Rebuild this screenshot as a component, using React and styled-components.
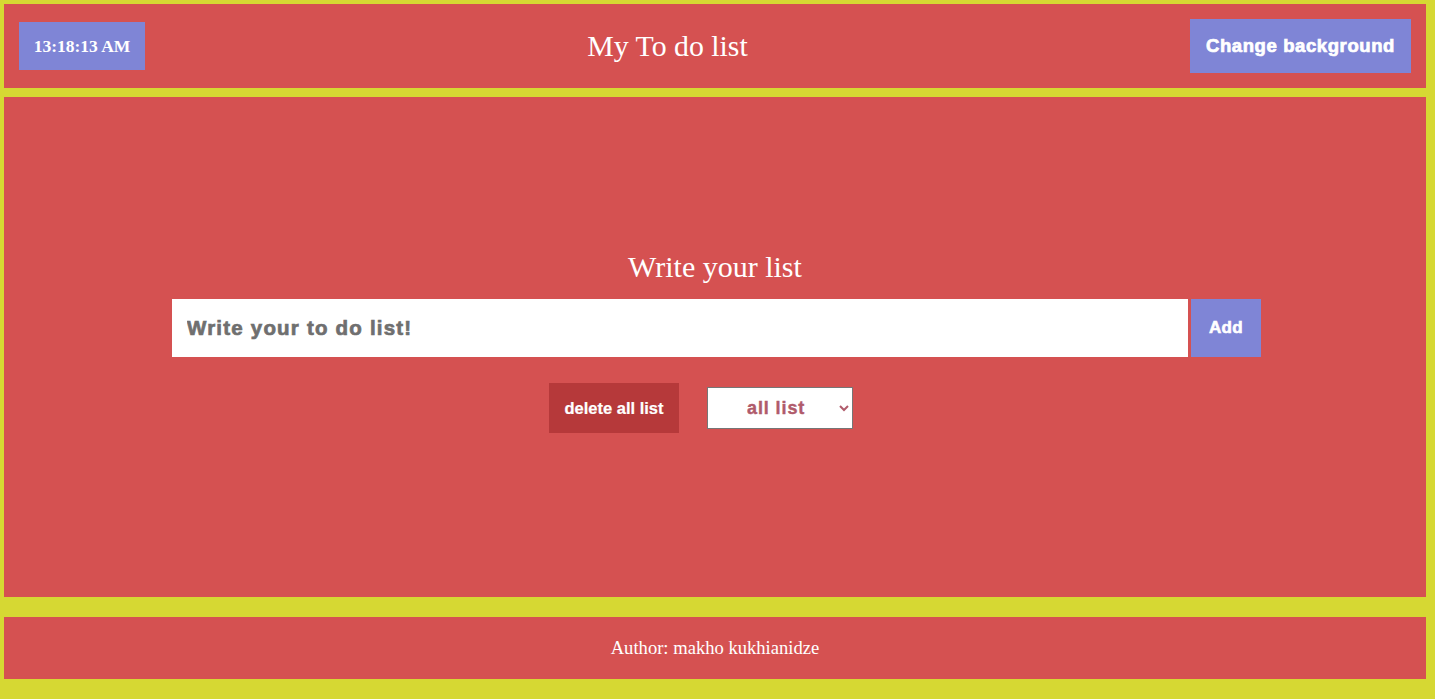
import React, { useState } from "react";
import styled, { createGlobalStyle } from "styled-components";

const Global = createGlobalStyle`
  html, body { margin: 0; padding: 0; }
  body {
    background: #d6d833;
    font-family: "Liberation Serif", "Times New Roman", serif;
  }
`;

const Page = styled.div`
  display: flex;
  flex-direction: column;
  padding: 4px 9px 20px 4px;
`;

const Header = styled.header`
  height: 84px;
  background: #d55151;
  display: flex;
  align-items: center;
  justify-content: space-between;
  padding: 0 15px;
`;

const Clock = styled.div`
  width: 126px;
  height: 48px;
  background: #7f85d6;
  color: #fff;
  display: flex;
  align-items: center;
  justify-content: center;
  font-family: "Liberation Serif", "Times New Roman", serif;
  font-weight: 700;
  font-size: 17.5px;
`;

const Title = styled.h1`
  margin: 0;
  color: #fff;
  font-weight: 400;
  font-size: 29.8px;
  font-family: "Liberation Serif", "Times New Roman", serif;
`;

const HeavyButton = styled.button`
  border: none;
  cursor: pointer;
  color: #fff;
  font-family: "Liberation Sans", Arial, sans-serif;
  font-weight: 700;
  padding: 0;
  display: flex;
  align-items: center;
  justify-content: center;
  background: ${(p) => p.$bg || "#7f85d6"};
  width: ${(p) => p.$w}px;
  height: ${(p) => p.$h}px;
  font-size: ${(p) => p.$fs}px;
  letter-spacing: ${(p) => p.$ls || 0}px;
  -webkit-text-stroke: ${(p) => p.$stroke || 0}px #fff;
`;

const Main = styled.main`
  margin-top: 9px;
  height: 500px;
  background: #d55151;
  display: flex;
  flex-direction: column;
  align-items: center;
  padding-top: 153px;
  box-sizing: border-box;
`;

const Heading = styled.h2`
  margin: 0;
  color: #fff;
  font-weight: 400;
  font-size: 30px;
  line-height: 34px;
  font-family: "Liberation Serif", "Times New Roman", serif;
`;

const InputRow = styled.div`
  margin-top: 15px;
  display: flex;
  gap: 3px;
  padding-left: 3px;
`;

const TodoInput = styled.input`
  width: 1016px;
  height: 58px;
  border: none;
  outline: none;
  box-sizing: border-box;
  padding: 0 0 0 15px;
  font-family: "Liberation Sans", Arial, sans-serif;
  font-weight: 700;
  font-size: 20.5px;
  letter-spacing: 1.2px;
  color: #6f6f6f;
  &::placeholder {
    color: #6f6f6f;
    -webkit-text-stroke: 0.7px #6f6f6f;
  }
`;

const Controls = styled.div`
  margin-top: 26px;
  display: flex;
  align-items: center;
  gap: 28px;
  padding-right: 28px;
`;

const Filter = styled.select`
  width: 146px;
  height: 42px;
  background: #fff;
  border: 1px solid #767676;
  border-radius: 0;
  padding: 0 0 0 35px;
  color: #b05b6b;
  font-family: "Liberation Sans", Arial, sans-serif;
  font-weight: 700;
  font-size: 18px;
  letter-spacing: 0.9px;
  -webkit-text-stroke: 0.4px #b05b6b;
  outline: none;
`;

const Footer = styled.footer`
  margin-top: 20px;
  height: 62px;
  background: #d55151;
  color: #fff;
  display: flex;
  align-items: center;
  justify-content: center;
  font-family: "Liberation Serif", "Times New Roman", serif;
  font-size: 18.6px;
`;

export default function App() {
  const [text, setText] = useState("");
  return (
    <Page>
      <Global />
      <Header>
        <Clock>13:18:13 AM</Clock>
        <Title>My To do list</Title>
        <HeavyButton $w={221} $h={54} $fs={18.5} $ls={0.6} $stroke={0.7}>
          Change background
        </HeavyButton>
      </Header>
      <Main>
        <Heading>Write your list</Heading>
        <InputRow>
          <TodoInput
            value={text}
            onChange={(e) => setText(e.target.value)}
            placeholder="Write your to do list!"
          />
          <HeavyButton $w={70} $h={58} $fs={17} $ls={0.3} $stroke={0.6}>
            Add
          </HeavyButton>
        </InputRow>
        <Controls>
          <HeavyButton $bg="#b6393a" $w={130} $h={50} $fs={16.5} $stroke={0.2}>
            delete all list
          </HeavyButton>
          <Filter defaultValue="all">
            <option value="all">all list</option>
            <option value="done">completed</option>
            <option value="todo">uncompleted</option>
          </Filter>
        </Controls>
      </Main>
      <Footer>Author: makho kukhianidze</Footer>
    </Page>
  );
}
